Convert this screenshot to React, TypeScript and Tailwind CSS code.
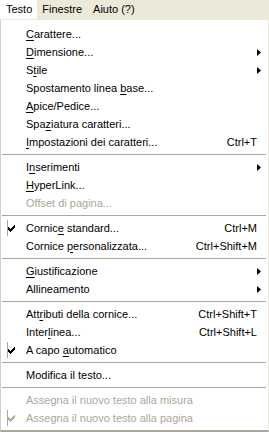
import React from 'react';

type Item = {
  label: string;
  u?: number;
  shortcut?: string;
  submenu?: boolean;
  checked?: boolean;
  disabled?: boolean;
};

type Entry = Item | 'sep';

const entries: Entry[] = [
  { label: 'Carattere...', u: 0 },
  { label: 'Dimensione...', u: 0, submenu: true },
  { label: 'Stile', u: 1, submenu: true },
  { label: 'Spostamento linea base...', u: 18 },
  { label: 'Apice/Pedice...', u: 0 },
  { label: 'Spaziatura caratteri...', u: 3 },
  { label: 'Impostazioni dei caratteri...', u: 0, shortcut: 'Ctrl+T' },
  'sep',
  { label: 'Inserimenti', u: 1, submenu: true },
  { label: 'HyperLink...', u: 0 },
  { label: 'Offset di pagina...', u: 0, disabled: true },
  'sep',
  { label: 'Cornice standard...', u: 6, shortcut: 'Ctrl+M', checked: true },
  { label: 'Cornice personalizzata...', u: 8, shortcut: 'Ctrl+Shift+M' },
  'sep',
  { label: 'Giustificazione', u: 0, submenu: true },
  { label: 'Allineamento', submenu: true },
  'sep',
  { label: 'Attributi della cornice...', u: 3, shortcut: 'Ctrl+Shift+T' },
  { label: 'Interlinea...', u: 5, shortcut: 'Ctrl+Shift+L' },
  { label: 'A capo automatico', u: 7, checked: true },
  'sep',
  { label: 'Modifica il testo...' },
  'sep',
  { label: 'Assegna il nuovo testo alla misura', disabled: true },
  { label: 'Assegna il nuovo testo alla pagina', disabled: true, checked: true },
];

function Label({ text, u }: { text: string; u?: number }) {
  if (u === undefined) return <span>{text}</span>;
  return (
    <span>
      {text.slice(0, u)}
      <span className="underline underline-offset-[2px]">{text[u]}</span>
      {text.slice(u + 1)}
    </span>
  );
}

function Check({ color }: { color: string }) {
  return (
    <svg width="7" height="7" viewBox="0 0 7 7" className="absolute left-[7px] top-[6px]">
      <path d="M0 2h1v1h1v1h1v-1h1v-1h1v-1h1v-1h1v3h-1v1h-1v1h-1v1h-1v1h-1v-1h-1v-1h-1z" fill={color} />
    </svg>
  );
}

function Row({ item }: { item: Item }) {
  const color = item.disabled ? '#aca899' : '#000000';
  return (
    <div
      className="relative flex h-[18px] items-center pl-[25px] pr-[11px]"
      style={{ color }}
    >
      {item.checked && (
        <>
          <div className="absolute left-[6px] top-[1px] h-[16px] w-px bg-[#aca899]" />
          <Check color={color} />
        </>
      )}
      <div className="flex-1 whitespace-nowrap">
        <Label text={item.label} u={item.disabled ? undefined : item.u} />
      </div>
      {item.shortcut && <div className="whitespace-nowrap">{item.shortcut}</div>}
      {item.submenu && (
        <svg width="4" height="7" viewBox="0 0 4 7" className="absolute right-[7px] top-[6px]">
          <path d="M0 0L4 3.5L0 7z" fill="#000" />
        </svg>
      )}
    </div>
  );
}

export default function App() {
  return (
    <div
      className="h-[432px] w-[269px] overflow-hidden bg-white text-[11px] leading-none text-black"
      style={{ fontFamily: '"Liberation Sans", Arial, sans-serif' }}
    >
      <div className="flex h-[19px] items-stretch bg-[#ece9d8]">
        <div className="flex items-center bg-white pl-[6px] pr-[5px]">Testo</div>
        <div className="flex items-center px-[5px]">Finestre</div>
        <div className="flex items-center px-[6px]">Aiuto (?)</div>
        <div className="flex-1" />
      </div>
      <div className="h-[413px] w-[269px] border-l border-t border-r border-b-2 border-l-[#d4d0c8] border-t-[#ece9d8] border-r-[#ece9d8] border-b-[#aca899] bg-white pt-[5px]">
        {entries.map((e, i) =>
          e === 'sep' ? (
            <div key={i} className="flex h-[7px] items-center px-[1px]">
              <div className="h-px w-[264px] bg-[#aca899]" />
            </div>
          ) : (
            <Row key={i} item={e} />
          ),
        )}
      </div>
    </div>
  );
}
